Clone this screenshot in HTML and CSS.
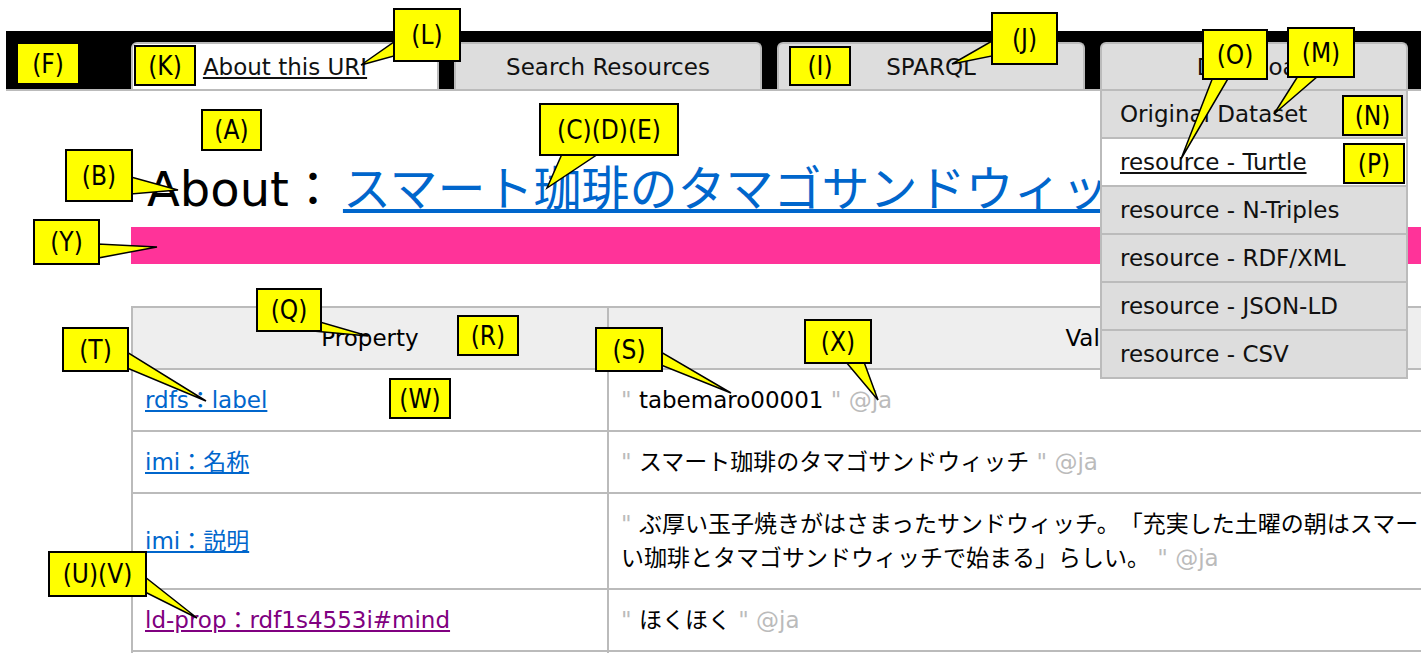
FILE: index.html
```html
<!DOCTYPE html>
<html lang="ja">
<head>
    <meta charset="UTF-8">
    <title>About：スマート珈琲のタマゴサンドウィッチ</title>
    <link rel="stylesheet" href="styles.css">
</head>
<body>
    <div class="navbar">
        <ul class="tabs">
            <li class="tab active"><a href="#" class="hover">About this URI</a></li>
            <li class="tab"><a href="#">Search Resources</a></li>
            <li class="tab"><a href="#">SPARQL</a></li>
            <li class="tab">
                <a href="#">Download</a>
                <ul class="menu">
                    <li><a href="#">Original Dataset</a></li>
                    <li class="hover"><a href="#">resource - Turtle</a></li>
                    <li><a href="#">resource - N-Triples</a></li>
                    <li><a href="#">resource - RDF/XML</a></li>
                    <li><a href="#">resource - JSON-LD</a></li>
                    <li><a href="#">resource - CSV</a></li>
                </ul>
            </li>
        </ul>
    </div>

    <div class="content">
        <h1 class="title">About：<a href="#">スマート珈琲のタマゴサンドウィッチ</a></h1>
        <div class="band"></div>

        <table class="props">
            <colgroup>
                <col class="col-prop">
                <col class="col-value">
            </colgroup>
            <tr>
                <th>Property</th>
                <th>Value</th>
            </tr>
            <tr>
                <td><a href="#">rdfs：label</a></td>
                <td><span class="q">"</span> tabemaro00001 <span class="q">" @ja</span></td>
            </tr>
            <tr>
                <td><a href="#">imi：名称</a></td>
                <td><span class="q">"</span> スマート珈琲のタマゴサンドウィッチ <span class="q">" @ja</span></td>
            </tr>
            <tr>
                <td><a href="#">imi：説明</a></td>
                <td><span class="q">"</span> ぶ厚い玉子焼きがはさまったサンドウィッチ。「充実した土曜の朝はスマートで美味し<br>い珈琲とタマゴサンドウィッチで始まる」らしい。 <span class="q">" @ja</span></td>
            </tr>
            <tr>
                <td><a href="#" class="visited">ld-prop：rdf1s4553i#mind</a></td>
                <td><span class="q">"</span> ほくほく <span class="q">" @ja</span></td>
            </tr>
            <tr>
                <td>&nbsp;</td>
                <td>&nbsp;</td>
            </tr>
        </table>
    </div>

    <!-- annotation callouts -->
    <svg class="note-tails" width="1421" height="653" viewBox="0 0 1421 653">
        <polygon points="394,42 394,56 361,65"/>
        <polygon points="992,41 992,56 952,64"/>
        <polygon points="1213,77 1229,77 1181,159"/>
        <polygon points="1298,76 1318,76 1274,114"/>
        <polygon points="131,177 131,194 178,190"/>
        <polygon points="562,154 598,154 547,188"/>
        <polygon points="98,244 98,258 157,247"/>
        <polygon points="302,330 320,322 368,336"/>
        <polygon points="127,352 127,368 206,401"/>
        <polygon points="661,352 661,365 731,393"/>
        <polygon points="846,362 864,362 878,400"/>
        <polygon points="145,577 145,592 197,618"/>
    </svg>
    <div class="note note-f">(F)</div>
    <div class="note note-k">(K)</div>
    <div class="note note-l">(L)</div>
    <div class="note note-i">(I)</div>
    <div class="note note-j">(J)</div>
    <div class="note note-o">(O)</div>
    <div class="note note-m">(M)</div>
    <div class="note note-n">(N)</div>
    <div class="note note-p">(P)</div>
    <div class="note note-a">(A)</div>
    <div class="note note-b">(B)</div>
    <div class="note note-cde">(C)(D)(E)</div>
    <div class="note note-y">(Y)</div>
    <div class="note note-q">(Q)</div>
    <div class="note note-r">(R)</div>
    <div class="note note-t">(T)</div>
    <div class="note note-w">(W)</div>
    <div class="note note-s">(S)</div>
    <div class="note note-x">(X)</div>
    <div class="note note-uv">(U)(V)</div>
</body>
</html>
```

FILE: styles.css
```css
:root {
    --line-color: #bbbbbb;
    --tab-color: #dddddd;
    --link-color: #0066cc;
    --visited-color: #800080;
    --band-color: #ff3399;
}

body {
    margin: 0;
    font-family: 'DejaVu Sans', 'Noto Sans CJK JP', sans-serif;
    font-size: 23px;
    color: #000;
    background: #fff;
    overflow: hidden;
    text-spacing-trim: space-all;
}

a {
    color: var(--link-color);
}

/* navigation */
.navbar {
    margin: 31px 0 0 6px;
    padding: 11px 0 0 125px;
    background: #000;
    border-bottom: 2px solid var(--line-color);
}

.tabs {
    display: flex;
    gap: 15px;
    margin: 0;
    padding: 0;
    list-style: none;
}

.tab {
    position: relative;
    width: 308px;
    height: 47px;
    box-sizing: border-box;
    border: 2px solid var(--line-color);
    border-bottom: none;
    border-radius: 6px 6px 0 0;
    background: var(--tab-color);
    display: flex;
    justify-content: center;
    align-items: center;
}

.tab > a {
    color: #111;
    text-decoration: none;
}

.tab.active {
    background: #fff;
}

.tab > a.hover {
    text-decoration: underline;
}

.menu {
    position: absolute;
    top: calc(100% + 2px);
    left: -2px;
    right: -2px;
    margin: 0;
    padding: 0;
    list-style: none;
    border-left: 2px solid var(--line-color);
    border-right: 2px solid var(--line-color);
    z-index: 5;
}

.menu li {
    background: var(--tab-color);
    border-bottom: 2px solid var(--line-color);
}

.menu a {
    display: block;
    height: 46px;
    line-height: 46px;
    padding: 0 18px;
    color: #111;
    text-decoration: none;
}

.menu li.hover {
    background: #fff;
}

.menu li.hover a {
    text-decoration: underline;
}

/* page body */
.content {
    padding-left: 131px;
}

.title {
    margin: 68px 0 0;
    padding-left: 16px;
    font-size: 48px;
    font-weight: normal;
    line-height: 60px;
    white-space: nowrap;
}

.title a {
    margin-left: 6px;
}

.band {
    margin-top: 8px;
    height: 37px;
    background: var(--band-color);
}

.props {
    margin-top: 42px;
    width: 1454px;
    table-layout: fixed;
    border-collapse: collapse;
    line-height: 34px;
}

.col-prop {
    width: 476px;
}

.col-value {
    width: 978px;
}

.props th,
.props td {
    border: 2px solid var(--line-color);
    padding: 13px 12px;
    text-align: left;
    white-space: nowrap;
}

.props th {
    background: #eeeeee;
    font-weight: normal;
    text-align: center;
}

.props .q {
    color: #bbbbbb;
}

.props a.visited {
    color: var(--visited-color);
}

/* callouts */
.note-tails {
    position: absolute;
    left: 0;
    top: 0;
    z-index: 10;
}

.note-tails polygon {
    fill: #ffff00;
    stroke: #000;
    stroke-width: 1.5;
}

.note {
    position: absolute;
    z-index: 11;
    box-sizing: border-box;
    display: flex;
    justify-content: center;
    align-items: center;
    background: #ffff00;
    border: 2px solid #000;
    font-family: 'DejaVu Sans Condensed', 'DejaVu Sans', sans-serif;
    font-size: 26px;
    color: #000;
}

.note-f   { left: 18px;   top: 44px;  width: 60px;  height: 39px; border-color: #ffff00; }
.note-k   { left: 134px;  top: 45px;  width: 62px;  height: 41px; }
.note-l   { left: 393px;  top: 8px;   width: 68px;  height: 54px; }
.note-i   { left: 789px;  top: 46px;  width: 62px;  height: 40px; }
.note-j   { left: 991px;  top: 12px;  width: 67px;  height: 53px; }
.note-o   { left: 1202px; top: 29px;  width: 66px;  height: 51px; }
.note-m   { left: 1287px; top: 27px;  width: 68px;  height: 51px; }
.note-n   { left: 1342px; top: 95px;  width: 61px;  height: 41px; }
.note-p   { left: 1343px; top: 143px; width: 62px;  height: 41px; }
.note-a   { left: 201px;  top: 109px; width: 61px;  height: 42px; }
.note-b   { left: 65px;   top: 149px; width: 68px;  height: 53px; }
.note-cde { left: 539px;  top: 103px; width: 140px; height: 53px; }
.note-y   { left: 33px;   top: 219px; width: 67px;  height: 46px; }
.note-q   { left: 256px;  top: 288px; width: 66px;  height: 44px; }
.note-r   { left: 457px;  top: 315px; width: 62px;  height: 41px; }
.note-t   { left: 62px;   top: 327px; width: 67px;  height: 45px; }
.note-w   { left: 389px;  top: 378px; width: 62px;  height: 41px; }
.note-s   { left: 595px;  top: 327px; width: 68px;  height: 45px; }
.note-x   { left: 804px;  top: 319px; width: 68px;  height: 45px; }
.note-uv  { left: 48px;   top: 551px; width: 99px;  height: 46px; }
```
